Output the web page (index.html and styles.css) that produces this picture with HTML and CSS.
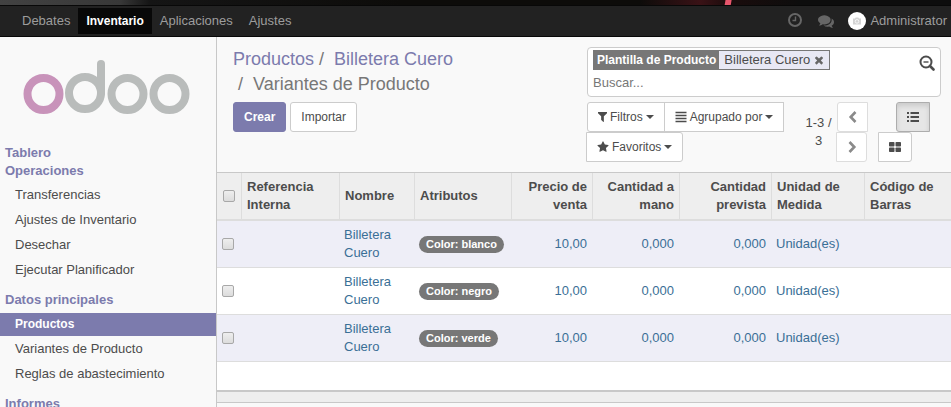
FILE: index.html
```html
<!DOCTYPE html>
<html lang="es">
<head>
<meta charset="utf-8">
<meta name="viewport" content="width=device-width, initial-scale=1">
<title>Variantes de Producto - Odoo</title>
<link rel="stylesheet" href="styles.css">
</head>
<body>
<div class="strip"></div>
<header class="navbar">
  <nav class="apps">
    <a href="#">Debates</a>
    <a href="#" class="active">Inventario</a>
    <a href="#">Aplicaciones</a>
    <a href="#">Ajustes</a>
  </nav>
  <div class="systray">
    <a href="#" aria-label="Actividades"><svg class="tray-icon" viewBox="0 0 16 16"><circle cx="7" cy="7" r="6" fill="none" stroke="currentColor" stroke-width="2"/><path d="M7.500 3.500v4h-3" fill="none" stroke="currentColor" stroke-width="1.400"/></svg></a>
    <a href="#" aria-label="Conversaciones"><svg class="tray-icon" viewBox="0 0 1792 1792"><path fill="currentColor" d="M1408 768q0 139-94 257t-256.500 186.500-353.500 68.500q-86 0-176-16-124 88-278 128-36 9-86 16h-3q-11 0-20.500-8t-11.500-21q-1-3-1-6.500t.5-6.500 2-6l2.500-5 3.500-5.500 4-5 4.500-5 4-4.500q5-6 23-25t26-29.500 22.500-29 25-38.500 20.500-44q-124-72-195-177t-71-224q0-139 94-257t256.500-186.500 353.500-68.500 353.500 68.500 256.500 186.500 94 257zm384 256q0 120-71 224.500t-195 176.500q10 24 20.500 44t25 38.500 22.500 29 26 29.500 23 25q1 1 4 4.500t4.500 5 4 5 3.500 5.500l2.500 5 2 6 .5 6.500-1 6.500q-3 14-13 22t-22 7q-50-7-86-16-154-40-278-128-90 16-176 16-271 0-472-132 58 4 88 4 161 0 309-45t264-129q125-92 192-212t67-254q0-77-23-152 129 71 204 178t75 230z"/></svg></a>
    <a href="#" class="user"><svg class="avatar" viewBox="0 0 18 18"><circle cx="9" cy="9" r="9" fill="#fff"/><path d="M5 6.500h2l.6-1h2.800l.6 1h2v6H5z" fill="#d4d4d4"/><circle cx="9" cy="9.400" r="1.800" fill="#d4d4d4" stroke="#fff" stroke-width=".8"/></svg><span>Administrator</span></a>
  </div>
</header>
<div class="body">
  <aside class="sidebar">
    <a href="#" class="logo" aria-label="odoo"><svg viewBox="0 0 168 56"><g fill="none" stroke="#b9bcbb" stroke-width="8"><circle cx="20.500" cy="35" r="16" stroke="#c893ba"/><circle cx="62" cy="34" r="16"/><path d="M78 34V5" stroke-linecap="round"/><circle cx="104.500" cy="35" r="16"/><circle cx="146.500" cy="35" r="16"/></g></svg></a>
    <nav class="menu">
      <h2>Tablero</h2>
      <h2>Operaciones</h2>
      <ul>
        <li><a href="#">Transferencias</a></li>
        <li><a href="#">Ajustes de Inventario</a></li>
        <li><a href="#">Desechar</a></li>
        <li><a href="#">Ejecutar Planificador</a></li>
      </ul>
      <h2>Datos principales</h2>
      <ul>
        <li><a href="#" class="active">Productos</a></li>
        <li><a href="#">Variantes de Producto</a></li>
        <li><a href="#">Reglas de abastecimiento</a></li>
      </ul>
      <h2>Informes</h2>
    </nav>
  </aside>
  <main class="content">
    <div class="control-panel">
      <div class="cp-left">
        <ol class="breadcrumb">
          <li><a href="#">Productos</a></li>
          <li><a href="#">Billetera Cuero</a></li>
          <li>Variantes de Producto</li>
        </ol>
        <div class="actions">
          <button class="btn primary" type="button">Crear</button>
          <button class="btn" type="button">Importar</button>
        </div>
      </div>
      <div class="cp-right">
        <div class="search">
          <div class="search-main">
            <div class="facet"><span class="facet-label">Plantilla de Producto</span><span class="facet-value">Billetera Cuero <button type="button" aria-label="Quitar filtro"><svg viewBox="0 0 1792 1792"><path fill="currentColor" d="M1490 1322q0 40-28 68l-136 136q-28 28-68 28t-68-28l-294-294-294 294q-28 28-68 28t-68-28l-136-136q-28-28-28-68t28-68l294-294-294-294q-28-28-28-68t28-68l136-136q28-28 68-28t68 28l294 294 294-294q28-28 68-28t68 28l136 136q28 28 28 68t-28 68l-294 294 294 294q28 28 28 68z"/></svg></button></span></div>
            <input type="text" placeholder="Buscar..." aria-label="Buscar">
          </div>
          <button class="search-more" type="button" aria-label="Búsqueda avanzada"><svg viewBox="0 0 16 16" fill="none" stroke="currentColor" stroke-width="2"><circle cx="7" cy="7" r="5.500"/><path d="M11 11l3.500 3.500" stroke-width="2.600" stroke-linecap="round"/><path d="M4.500 7h5" stroke-width="1.400"/></svg></button>
        </div>
        <div class="tools">
          <div class="filters">
            <button class="btn" type="button"><svg class="icon narrow" viewBox="256 256 1280 1408"><path fill="currentColor" d="M1595 295q17 41-14 70l-493 493v742q0 42-39 59-13 5-25 5-27 0-45-19l-256-256q-19-19-19-45v-486l-493-493q-31-29-14-70 17-39 59-39h1280q42 0 59 39z"/></svg>Filtros<span class="caret"></span></button>
            <button class="btn" type="button"><svg class="icon" viewBox="0 0 12 12"><path d="M0.500 1.500h11M0.500 4.500h11M0.500 7.500h11M0.500 10.500h11" stroke="currentColor" stroke-width="1.600"/></svg>Agrupado por<span class="caret"></span></button>
            <button class="btn" type="button"><svg class="icon" viewBox="0 0 1792 1792"><path fill="currentColor" d="M1728 647q0 22-26 48l-363 354 86 500q1 7 1 20 0 21-10.500 35.500t-30.500 14.500q-19 0-40-12l-449-236-449 236q-22 12-40 12-21 0-31.500-14.500t-10.500-35.500q0-6 2-20l86-500-364-354q-25-27-25-48 0-37 56-46l502-73 225-455q19-41 49-41t49 41l225 455 502 73q56 9 56 46z"/></svg>Favoritos<span class="caret"></span></button>
          </div>
          <div class="pager-count">1-3 / 3</div>
          <div class="pager">
            <button class="btn" type="button" aria-label="Anterior"><svg class="icon" viewBox="0 0 12 12"><path d="M8.500 1L3.700 6l4.800 5" fill="none" stroke="currentColor" stroke-width="2.600"/></svg></button>
            <button class="btn" type="button" aria-label="Siguiente"><svg class="icon" viewBox="0 0 12 12"><path d="M3.500 1l4.800 5L3.500 11" fill="none" stroke="currentColor" stroke-width="2.600"/></svg></button>
          </div>
          <div class="views">
            <button class="btn active" type="button" aria-label="Lista"><svg class="icon" viewBox="0 0 12 12"><path d="M0 2h2M3.500 2H12M0 6h2M3.500 6H12M0 10h2M3.500 10H12" stroke="currentColor" stroke-width="2"/></svg></button>
            <button class="btn" type="button" aria-label="Kanban"><svg class="icon" viewBox="0 0 12 12" fill="currentColor"><rect y="1" width="5.500" height="4.500" rx=".8"/><rect x="6.500" y="1" width="5.500" height="4.500" rx=".8"/><rect y="6.500" width="5.500" height="4.500" rx=".8"/><rect x="6.500" y="6.500" width="5.500" height="4.500" rx=".8"/></svg></button>
          </div>
        </div>
      </div>
    </div>
    <table class="list">
      <colgroup><col class="c-check"><col class="c-ref"><col class="c-name"><col class="c-attr"><col class="c-price"><col class="c-hand"><col class="c-forecast"><col class="c-unit"><col class="c-code"></colgroup>
      <thead>
        <tr><th><input type="checkbox" aria-label="Seleccionar todo"></th><th>Referencia Interna</th><th>Nombre</th><th>Atributos</th><th class="num">Precio de venta</th><th class="num">Cantidad a mano</th><th class="num">Cantidad prevista</th><th>Unidad de Medida</th><th>Código de Barras</th></tr>
      </thead>
      <tbody>
        <tr><td><input type="checkbox" aria-label="Seleccionar blanco"></td><td></td><td>Billetera Cuero</td><td><span class="badge">Color: blanco</span></td><td class="num">10,00</td><td class="num">0,000</td><td class="num">0,000</td><td>Unidad(es)</td><td></td></tr>
        <tr><td><input type="checkbox" aria-label="Seleccionar negro"></td><td></td><td>Billetera Cuero</td><td><span class="badge">Color: negro</span></td><td class="num">10,00</td><td class="num">0,000</td><td class="num">0,000</td><td>Unidad(es)</td><td></td></tr>
        <tr><td><input type="checkbox" aria-label="Seleccionar verde"></td><td></td><td>Billetera Cuero</td><td><span class="badge">Color: verde</span></td><td class="num">10,00</td><td class="num">0,000</td><td class="num">0,000</td><td>Unidad(es)</td><td></td></tr>
        <tr class="empty"><td colspan="9"></td></tr>
      </tbody>
      <tfoot><tr><td colspan="9"></td></tr></tfoot>
    </table>
  </main>
</div>
</body>
</html>
```
FILE: styles.css
```css
* { box-sizing: border-box; }
html, body { height: 100%; }
body {
  margin: 0;
  display: flex;
  flex-direction: column;
  overflow: hidden;
  background: #f9f9f9;
  color: #4c4c4c;
  font: 13px/18px "Liberation Sans", Arial, sans-serif;
}
a { color: inherit; text-decoration: none; }
button, input { font: inherit; color: inherit; }
svg { display: block; }

.strip {
  flex: none;
  height: 5px;
  background: linear-gradient(100deg, transparent 714px, #e8566c 715px, #e8566c 720px, transparent 721px),
    linear-gradient(90deg, #424242 0, #383838 120px, #151515 150px, #0d0c0a 400px, #0d0c0a 640px, #3a1216 700px, #1a0c0c 730px, #0d0d0d 800px);
}
.navbar {
  flex: none;
  display: flex;
  justify-content: space-between;
  height: 32px;
  padding: 2px 4px 2px 14px;
  background: #222;
  border: solid #080808;
  border-width: 1px 0;
  color: #9d9d9d;
}
.apps { display: flex; }
.apps a { padding: 4px 8px; }
.apps .active { background: #080808; color: #fff; font-size: 12px; font-weight: bold; }
.systray { display: flex; align-items: center; gap: 14px; color: #666; }
.tray-icon { width: 16px; height: 16px; }
.user { display: flex; align-items: center; gap: 4px; color: #9d9d9d; }
.avatar { width: 18px; height: 18px; }

.body { flex: 1; display: flex; min-height: 0; }
.sidebar {
  flex: none;
  width: 217px;
  border-right: 1px solid #c8c8c8;
  overflow: hidden;
}
.logo { display: block; width: 168px; margin: 22px 0 29px 23px; }
.menu h2 { margin: 0; padding-left: 5px; font-size: 13px; line-height: 18px; color: #7c7bad; }
.menu ul { list-style: none; margin: 4px 0 9px; padding: 0; }
.menu li { margin-bottom: 2px; }
.menu li a { display: block; padding: 2px 15px 3px; }
.menu .active { background: #7c7bad; color: #fff; font-size: 12px; font-weight: bold; }

.content { flex: 1; min-width: 0; display: flex; flex-direction: column; }
.control-panel {
  display: flex;
  justify-content: space-between;
  padding: 10px 10px 10px 16px;
  border-bottom: 1px solid #c8c8c8;
}
.cp-left { width: 40%; }
.breadcrumb {
  display: flex;
  flex-wrap: wrap;
  margin: 0 0 5px;
  padding: 0;
  list-style: none;
  font-size: 18px;
  line-height: 25px;
  color: #777;
}
.breadcrumb a { color: #7c7bad; }
.breadcrumb li + li::before { content: "/"; padding: 0 10px 0 5px; }
.actions { display: flex; gap: 4px; }
.btn {
  display: flex;
  align-items: center;
  justify-content: center;
  height: 30px;
  padding: 0 10px;
  background: #fff;
  border: 1px solid #ccc;
  border-radius: 3px;
  font-size: 12px;
  white-space: nowrap;
}
.primary { background: #7c7bad; border-color: #7c7bad; color: #fff; font-weight: bold; }
.cp-right { width: 354px; }
.search {
  display: flex;
  justify-content: space-between;
  align-items: flex-start;
  padding: 2px 5px;
  background: #fff;
  border: 1px solid #ccc;
  border-radius: 4px;
}
.facet {
  display: flex;
  height: 20px;
  border: 1px solid #777;
  background: #e8e8f4;
}
.facet-label { padding: 0 3px; background: #777; color: #fff; font-size: 12px; font-weight: bold; }
.facet-value { display: flex; align-items: center; gap: 3px; padding: 0 4px 0 5px; }
.facet button { padding: 0; border: 0; background: none; color: #666; }
.facet svg { width: 12px; height: 12px; }
.search input {
  display: block;
  width: 100%;
  height: 24px;
  padding: 0;
  border: 0;
  outline: 0;
  background: none;
}
.search input::placeholder { color: #777; opacity: 1; }
.search-more { margin-top: 5px; padding: 0; border: 0; background: none; }
.search-more svg { width: 16px; height: 16px; }

.tools { display: flex; align-items: flex-start; margin-top: 5px; }
.filters { display: flex; flex-wrap: wrap; width: 213px; }
.filters .btn { gap: 3px; }
.filters .btn:first-child { border-radius: 3px 0 0 3px; }
.filters .btn + .btn { margin-left: -1px; border-radius: 0; }
.filters .btn:last-child { border-radius: 0 3px 3px 0; }
.icon { width: 12px; height: 12px; }
.narrow { width: 9px; height: 10px; }
.caret { border: 4px solid transparent; border-top-color: currentColor; border-bottom: 0; }
.pager-count { width: 37px; padding: 12px 4px 0; text-align: center; }
.pager .btn { width: 31px; padding: 0; color: #8a8a8a; border-color: #ddd; border-radius: 3px 0 0 3px; }
.pager .btn:last-child { margin-left: -1px; border-radius: 0 3px 3px 0; }
.views {
  flex: 1;
  display: flex;
  flex-direction: column;
  align-items: flex-end;
  padding-right: 11px;
}
.views .btn:last-child { margin-right: 18px; border-radius: 0 3px 3px 0; }
.views .active {
  background: #e6e6e6;
  border-color: #adadad;
  border-radius: 3px 0 0 3px;
  box-shadow: inset 0 3px 5px rgba(0, 0, 0, .12);
}

.list { width: 100%; table-layout: fixed; border-collapse: separate; border-spacing: 0; background: #fff; }
.c-check { width: 25px; }
.c-ref { width: 98px; }
.c-name { width: 75px; }
.c-attr { width: 97px; }
.c-price { width: 81px; }
.c-hand { width: 87px; }
.c-forecast { width: 92px; }
.c-unit { width: 93px; }
.c-code { width: 86px; }
.list th {
  height: 48px;
  padding: 4px 5px;
  background: #eee;
  border-right: 1px solid #ddd;
  border-bottom: 2px solid #ddd;
  text-align: left;
}
.list th:first-child { padding-left: 6px; }
.list th:last-child { border-right: 0; }
.list td { height: 47px; padding: 5px 6px 5px 5px; border-bottom: 1px solid #ddd; color: #3a6f96; }
.list tbody td:not(:first-child) { padding-left: 4px; }
.list tbody tr:nth-child(odd) td { background: #eeeef7; }
.list th.num, .list td.num { text-align: right; }
.list .empty td { height: 28px; padding: 0; border: 0; }
.list tbody .empty td:only-child { background: #fff; }
.list tfoot td { height: 13px; padding: 0; background: #eee; border-top: 2px solid #c8c8c8; border-bottom: 1px solid #c8c8c8; }
.list input {
  appearance: none;
  display: block;
  width: 12px;
  height: 12px;
  margin: 0;
  border: 1px solid #a8a8a8;
  border-radius: 2px;
  background: linear-gradient(#eee, #dcdcdc);
}
.badge {
  display: inline-block;
  padding: 0 7px;
  border-radius: 9px;
  background: #777;
  color: #fff;
  font-size: 11px;
  font-weight: bold;
  line-height: 17px;
}
```
